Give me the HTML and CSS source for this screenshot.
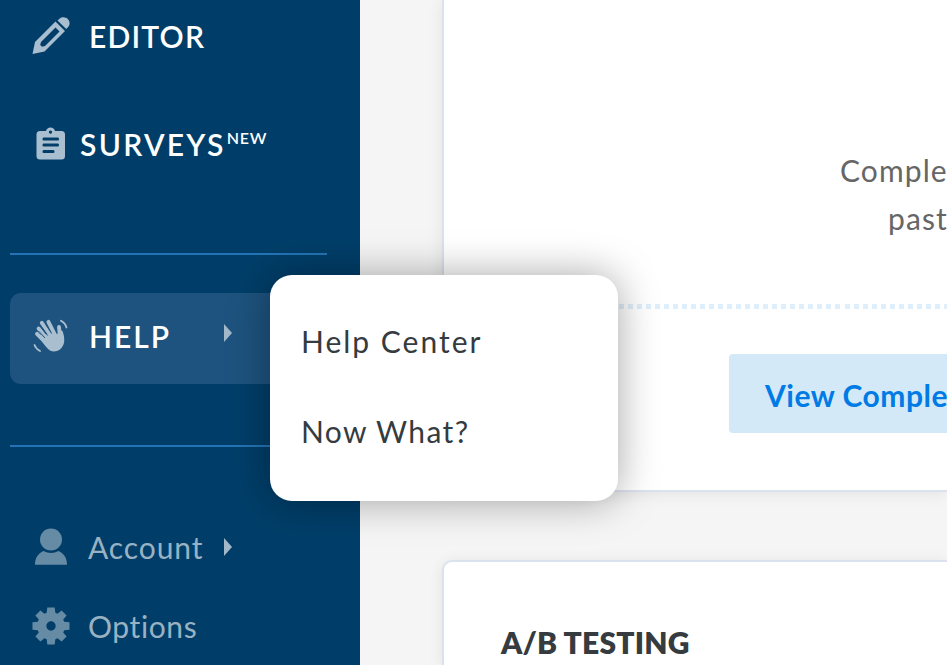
FILE: index.html
```html
<!DOCTYPE html>
<html lang="en">
<head>
    <meta charset="UTF-8">
    <meta name="viewport" content="width=device-width, initial-scale=1.0">
    <title>Dashboard</title>
    <link rel="stylesheet" href="styles.css">
</head>
<body>
    <nav class="sidebar">
        <a class="item editor">
            <svg class="icon" width="38" height="38" viewBox="0 0 38 38">
                <path fill-rule="evenodd" d="M.5 37L3 25L23.500 4.500L33 14L12.500 34.500ZM9 25L8.200 28L10 29.800L13 29L27.500 14.500L23.500 10.500Z"/>
                <path d="M25.500 3.500L27.500 1.800C30.500 -.6 34 .3 35.800 2.100C37.900 4.200 38.300 7.500 36.200 10L34.200 12Z"/>
            </svg>
            <span class="label">EDITOR</span>
        </a>
        <a class="item surveys">
            <svg class="icon" width="30" height="34" viewBox="0 0 30 34">
                <path fill-rule="evenodd" d="M4 4H10C10.500 1.700 12.300 .5 14.500 .5S18.500 1.700 19 4H25.500Q29 4 29 7.500V29Q29 32.500 25.500 32.500H4Q.5 32.500 .5 29V7.500Q.5 4 4 4ZM14.500 3.400A1.700 1.700 0 1 0 14.500 6.800A1.700 1.700 0 1 0 14.500 3.400ZM7.500 10.500Q6.500 10.500 6.500 12T7.500 13.500H22Q23 13.500 23 12T22 10.500ZM7.500 16.500Q6.500 16.500 6.500 18T7.500 19.500H22Q23 19.500 23 18T22 16.500ZM7.500 23Q6.500 23 6.500 24.500T7.500 26H17.500Q18.500 26 18.500 24.500T17.500 23Z"/>
            </svg>
            <span class="label">SURVEYS</span><span class="new">NEW</span>
        </a>
        <hr class="line">
        <div class="item help">
            <svg class="icon" width="36" height="34" viewBox="0 0 36 34">
                <g class="stroke">
                    <path stroke-width="3.900" d="M13 24L4 14.800M14 20L5.600 9.500M18 17L8.800 3.800M22 16L15.400 2.900M27 18L26 8"/>
                    <path stroke-width="1.800" d="M28 1.800Q32 3.500 33.500 8.500M1.500 26Q3 30 7 32"/>
                </g>
                <path d="M6 16L14 15L20 13L24 15.500L27 11L29.500 12Q32.500 20 30.500 25.500C28 31.500 22 34 17 31.500Q13 29 6 18Z"/>
                <path class="gap" d="M5.700 12.200L12 19M8.200 8L14.600 16.500M12.800 5.500L18.600 14.500"/>
            </svg>
            <span class="label">HELP</span>
            <i class="arrow"></i>
            <div class="menu">
                <a>Help Center</a>
                <a class="now">Now What?</a>
            </div>
        </div>
        <hr class="line">
        <a class="item account">
            <svg class="icon" width="34" height="38" viewBox="0 0 34 38">
                <circle cx="17" cy="11.500" r="11"/>
                <path d="M9.500 23Q17 27 24.500 23C30 25.500 33 30 33 36.800H1C1 30 4 25.500 9.500 23Z"/>
            </svg>
            <span class="label">Account</span>
            <i class="arrow"></i>
        </a>
        <a class="item options">
            <svg class="icon" width="38" height="38" viewBox="-19 -19 38 38">
                <path fill-rule="evenodd" d="M-3.700 -18.500H3.700L4.300 -13.200L6.600 -12.200L10.600 -15.600L15.600 -10.600L12.200 -6.600L13.200 -4.300L18.500 -3.700V3.700L13.200 4.300L12.200 6.600L15.600 10.600L10.600 15.600L6.600 12.200L4.300 13.200L3.700 18.500H-3.700L-4.300 13.200L-6.600 12.200L-10.600 15.600L-15.600 10.600L-12.200 6.600L-13.200 4.300L-18.500 3.700V-3.700L-13.200 -4.300L-12.200 -6.600L-15.600 -10.600L-10.600 -15.600L-6.600 -12.200L-4.300 -13.200ZM0 -4.700A4.700 4.700 0 1 0 0 4.700A4.700 4.700 0 1 0 0 -4.700Z"/>
            </svg>
            <span class="label">Options</span>
        </a>
    </nav>
    <main class="content">
        <section class="card first">
            <p class="text"><span>Comple</span><span class="indent">past</span></p>
            <div class="dots"></div>
            <a class="button">View Comple</a>
        </section>
        <section class="card second">
            <h2>A/B TESTING</h2>
        </section>
    </main>
</body>
</html>
```

FILE: styles.css
```css
* {
    box-sizing: border-box;
}
body {
    margin: 0;
    width: 947px;
    height: 665px;
    overflow: hidden;
    display: flex;
    background: #f5f5f5;
    font-family: Lato, "Liberation Sans", sans-serif;
    font-size: 30px;
    font-variant-ligatures: none;
    line-height: 36px;
    white-space: nowrap;
}
.sidebar {
    flex: none;
    width: 360px;
    height: 665px;
    padding-left: 10px;
    background: #003e69;
    position: relative;
    z-index: 1;
}
.item {
    display: flex;
    align-items: center;
    color: #fff;
    font-weight: 600;
}
.icon {
    flex: none;
    fill: #a9bfcf;
}
.stroke {
    fill: none;
    stroke: #a9bfcf;
    stroke-linecap: round;
}
.gap {
    fill: none;
    stroke: #1d537e;
    stroke-width: 1;
}
.editor {
    height: 71px;
    padding-left: 22px;
}
.editor .label {
    margin-left: 19px;
    letter-spacing: 1.2px;
}
.surveys {
    height: 145px;
    padding-left: 26px;
}
.surveys .label {
    margin-left: 14px;
    letter-spacing: 2.3px;
}
.new {
    font-size: 16px;
    line-height: 20px;
    margin: -12px 0 0 1px;
    letter-spacing: 0.8px;
}
.line {
    width: 317px;
    height: 2px;
    margin: 37px 0 0;
    border: 0;
    background: #2474b5;
}
.help {
    position: relative;
    height: 91px;
    width: 317px;
    margin: 38px 0 61px;
    padding-left: 23px;
    padding-bottom: 6px;
    border-radius: 11px;
    background: #1d537e;
}
.help + .line {
    margin-top: 0;
}
.help .label {
    width: 114px;
    margin-left: 20px;
    letter-spacing: 2px;
}
.arrow {
    width: 8px;
    height: 18px;
    margin-left: 21px;
    background: #a3b9ca;
    clip-path: polygon(0 0, 100% 50%, 0 100%);
}
.help .arrow {
    margin-bottom: 5px;
}
.menu {
    position: absolute;
    left: 260px;
    top: -18px;
    width: 348px;
    height: 226px;
    padding: 21px 31px;
    border-radius: 22px;
    background: #fff;
    box-shadow: 0 0 40px rgba(0, 0, 0, 0.35);
    color: #353b3f;
    font-weight: 400;
    letter-spacing: 2px;
}
.menu a {
    display: block;
    line-height: 90px;
}
.menu .now {
    letter-spacing: 1.4px;
}
.account,
.options {
    color: #99b2c3;
    font-weight: 400;
}
.account .icon,
.options .icon {
    fill: #668ba5;
}
.account {
    height: 80px;
    margin-top: 60px;
    padding-left: 24px;
}
.account .label {
    width: 115px;
    margin-left: 20px;
    letter-spacing: 0.9px;
}
.options {
    height: 77px;
    padding-left: 22px;
}
.options .label {
    margin-left: 18px;
    letter-spacing: 0.6px;
}
.content {
    flex: none;
    width: 587px;
    height: 665px;
    padding-left: 82px;
    overflow: hidden;
}
.card {
    border: 2px solid #dce1ee;
    border-right: 0;
    background: #fff;
    box-shadow: 0 2px 15px rgba(0, 0, 0, 0.08);
}
.first {
    height: 492px;
    border-top: 0;
    padding-top: 146px;
}
.text {
    display: flex;
    flex-direction: column;
    margin: 0 0 62px;
    padding-left: 396px;
    line-height: 48px;
    letter-spacing: 1.1px;
    color: #666;
}
.indent {
    padding-left: 48px;
}
.dots {
    height: 5px;
    margin-left: 57px;
    background: repeating-linear-gradient(90deg, #deeefb 0 5px, transparent 5px 9.04px);
}
.button {
    display: block;
    height: 79px;
    margin: 45px 0 0 285px;
    padding-left: 36px;
    border-radius: 4px 0 0 4px;
    background: #d4e9f8;
    color: #007be5;
    font-weight: 700;
    letter-spacing: 0.5px;
    line-height: 82px;
}
.second {
    height: 105px;
    margin-top: 68px;
    padding: 62px 0 0 57px;
    border-bottom: 0;
    border-radius: 10px 0 0 0;
}
h2 {
    margin: 0;
    color: #353b3f;
    font-size: 30px;
    font-weight: 800;
    letter-spacing: 0.2px;
    line-height: 36px;
}
```
